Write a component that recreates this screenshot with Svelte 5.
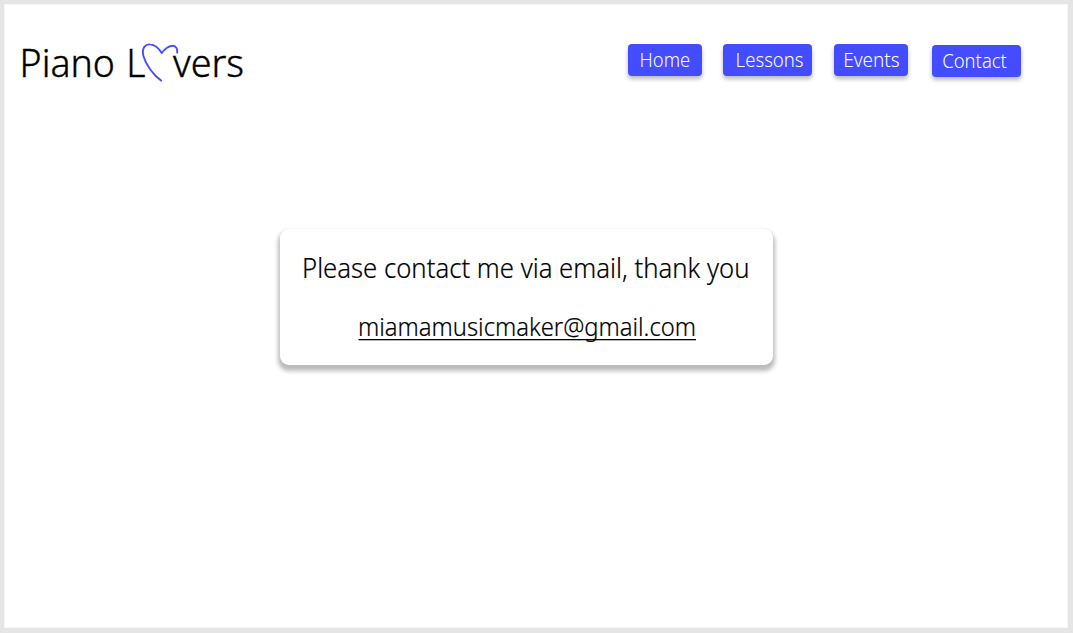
<script>
  const links = [
    { label: 'Home', width: 74, gap: 0, drop: 0, x: 11.6, length: 50.5 },
    { label: 'Lessons', width: 89.5, gap: 21.2, drop: 0, x: 12.6, length: 68 },
    { label: 'Events', width: 74, gap: 21.3, drop: 0, x: 9.2, length: 56.5 },
    { label: 'Contact', width: 89.5, gap: 24.3, drop: 1, x: 10.2, length: 64.7 }
  ];
</script>

<div class="page">
  <header>
    <svg class="logo" width="240" height="56" viewBox="0 0 240 56" role="img" aria-label="Piano Lovers">
      <text x="0.6" y="43.1" textLength="95.4" lengthAdjust="spacingAndGlyphs">Piano</text>
      <text x="107.2" y="43.1" textLength="19.2" lengthAdjust="spacingAndGlyphs">L</text>
      <text x="154" y="43.1" textLength="71" lengthAdjust="spacingAndGlyphs">vers</text>
      <path d="M142.2 46.6C134.7 41.5 126.9 31 124.4 22C122.4 13.5 126.7 9.9 131.2 10.4C136 10.7 140.5 15.5 142.7 19C145.5 15 150.5 11.5 154 11.7C157.3 11.9 158.5 15 158.2 18.6" />
    </svg>
    <nav>
      {#each links as link}
        <a
          href="#{link.label.toLowerCase()}"
          style="width:{link.width}px;margin-left:{link.gap}px;margin-top:{link.drop}px"
        >
          <svg width={link.width} height="32">
            <text x={link.x} y="23.4" textLength={link.length} lengthAdjust="spacingAndGlyphs">{link.label}</text>
          </svg>
        </a>
      {/each}
    </nav>
  </header>
  <main>
    <svg width="493" height="136">
      <text class="message" x="22" y="48.5" textLength="447.5" lengthAdjust="spacingAndGlyphs">Please contact me via email, thank you</text>
      <text class="email" x="78" y="107.2" textLength="338" lengthAdjust="spacingAndGlyphs">miamamusicmaker@gmail.com</text>
      <rect x="78.5" y="110" width="337.5" height="1.3" />
    </svg>
  </main>
</div>

<style>
  :global(body) {
    background: #e5e5e5;
  }
  .page {
    box-sizing: border-box;
    width: 1073px;
    height: 633px;
    border: solid #e5e5e5;
    border-width: 4px 5px 5px 4px;
    background: #fff;
    box-shadow: inset 0 0 0 1px #f7f7f7;
    font-family: 'Noto Sans', 'Open Sans', sans-serif;
    font-weight: 300;
    overflow: hidden;
  }
  svg {
    display: block;
  }
  header {
    display: flex;
    justify-content: space-between;
    height: 105px;
    padding: 30px 46.6px 0 15px;
  }
  .logo text {
    font-size: 38px;
    stroke: #000;
    stroke-width: 0.4;
  }
  .logo path {
    fill: none;
    stroke: #454eff;
    stroke-width: 1.9;
    stroke-linecap: round;
    stroke-linejoin: round;
  }
  nav {
    display: flex;
    align-items: flex-start;
    padding-top: 10px;
  }
  nav a {
    height: 32px;
    border-radius: 4px;
    background: #444cff;
    box-shadow: 0 3px 4px rgba(0, 0, 0, 0.28);
    text-decoration: none;
  }
  nav text {
    fill: #fff;
    font-size: 19.2px;
  }
  main {
    width: 493px;
    height: 135.5px;
    margin: 90px 0 0 276px;
    border-radius: 9px;
    background: #fff;
    box-shadow: 0 4px 4px 2px rgba(0, 0, 0, 0.27);
  }
  main text {
    stroke: #000;
    stroke-width: 0.2;
  }
  .message {
    font-size: 27px;
  }
  .email {
    font-size: 25.5px;
  }
</style>
